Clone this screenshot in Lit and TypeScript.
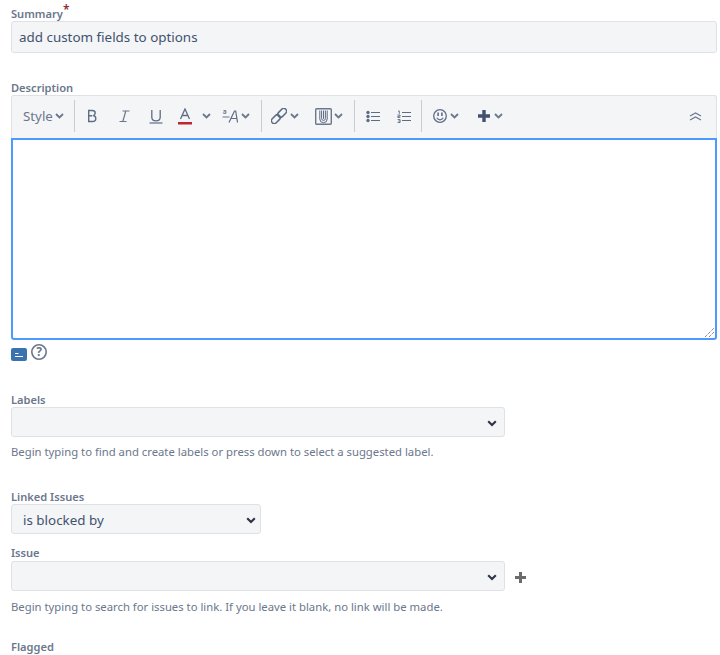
import { LitElement, html, css, svg } from "lit";
import { customElement } from "lit/decorators.js";

const chev = (cls: string) => html`<svg class="chev ${cls}" width="9" height="6" viewBox="0 0 9 6"><path d="M1 1l3.500 3.500L8 1" fill="none" stroke="currentColor" stroke-width="1.800"/></svg>`;

const icon = (cls: string, w: number, h: number, body: unknown) =>
  html`<svg class=${cls} width=${w} height=${h} viewBox="0 0 ${w} ${h}">${body}</svg>`;

const arrow = (cls: string) => html`<svg class="arrow ${cls}" width="10" height="7" viewBox="0 0 10 7"><path d="M1.200 1.200L5 5l3.800-3.800" fill="none" stroke="#2d3446" stroke-width="2.100"/></svg>`;

@customElement("app-root")
export class AppRoot extends LitElement {
  static styles = css`
    :host {
      display: block;
      box-sizing: border-box;
      width: 720px;
      height: 655px;
      overflow: hidden;
      padding: 6px 3px 0 11px;
      background: #fff;
      font-family: "Noto Sans", "Open Sans", sans-serif;
      color: #42526e;
    }
    label, .label {
      display: block;
      font-size: 11.1px;
      line-height: 15px;
      font-weight: 600;
      color: #6b778c;
    }
    .req { color: #8b2e3a; font-size: 12px; position: relative; top: -4px; line-height: 0; }
    .input {
      box-sizing: border-box;
      width: 100%;
      height: 32px;
      margin: 0;
      padding: 0 7px;
      background: #f4f5f7;
      border: 1px solid #dfe1e6;
      border-radius: 3px;
      font: 13.4px/30px "Noto Sans", sans-serif;
      color: #42526e;
      display: block;
    }
    .desc { margin-top: 27px; }
    .toolbar {
      box-sizing: border-box;
      height: 43px;
      display: flex;
      align-items: center;
      background: #f4f5f7;
      border: 1px solid #dfe1e6;
      border-bottom: none;
      border-radius: 3px 3px 0 0;
      padding: 0 0 2px 0;
      color: #5e6c84;
    }
    .toolbar svg { flex: none; display: block; }
    .style { font-size: 13.3px; color: #6b778c; margin-left: 11px; width: 31px; flex: none; }
    .chev { color: #6b778c; }
    .sep { width: 1px; height: 32px; background: #c9ccd1; flex: none; }
    .sep1 { margin-left: 10px; }
    .sep2 { margin-left: 11px; }
    .sep3 { margin-left: 11px; }
    .sep4 { margin-left: 10px; }
    .b { margin-left: 11px; }
    .i { margin-left: 20px; }
    .u { margin-left: 19px; }
    .a { margin-left: 15px; }
    .ac { margin-left: 10px; }
    .aa { margin-left: 11px; }
    .ml1 { margin-left: 1px; }
    .ml2 { margin-left: 2px; }
    .ml3 { margin-left: 3px; }
    .ml4 { margin-left: 4px; }
    .link { margin-left: 9px; }
    .clip { margin-left: 16px; }
    .ul { margin-left: 11px; }
    .ol { margin-left: 17px; }
    .smile { margin-left: 11px; }
    .plus { margin-left: 19px; }
    .spacer { flex: 1; }
    .collapse { margin-right: 14px; }
    .editor {
      box-sizing: border-box;
      height: 202px;
      border: 2px solid #4c9aff;
      border-radius: 0 0 3px 3px;
      background: #fff;
      position: relative;
    }
    .grip { position: absolute; right: 0; bottom: 0; }
    .under { display: flex; align-items: flex-start; height: 18px; margin-top: 4px; gap: 4px; }
    .folder { margin-top: 4px; }
    .labels { margin-top: 30px; }
    .sel { position: relative; width: 494px; flex: none; }
    .sel.short { width: 250px; }
    select.input { height: 30px; padding: 0 24px 0 11px; appearance: none; }
    .arrow { position: absolute; top: 13px; right: 8px; pointer-events: none; }
    .arrow.near { right: 5px; }
    .hint { font-size: 11.3px; line-height: 16px; color: #6b778c; margin: 0; }
    .labels .hint { margin-top: 7px; }
    .linked { margin-top: 29px; }
    .issue { margin-top: 11px; }
    .issue label { margin-bottom: 1px; }
    .row { display: flex; align-items: center; gap: 10px; }
    .plusbtn { margin-top: 3px; }
    .issue .hint { margin-top: 8px; }
    .flagged { margin-top: 24px; }
  `;

  render() {
    const ink = "#42526e";
    const tool = "#5e6c84";
    return html`
      <label for="s">Summary<span class="req">*</span></label>
      <input id="s" class="input" .value=${"add custom fields to options"} />

      <div class="desc">
        <span class="label">Description</span>
        <div class="toolbar">
          <span class="style">Style</span>${chev("ml1")}
          <div class="sep sep1"></div>
          ${icon("b", 12, 14, svg`<path d="M2.700 1.500h3.500c1.800 0 3 .9 3 2.600 0 1.300-.8 2.200-2 2.500 1.600.2 2.600 1.200 2.600 2.800 0 1.900-1.400 3.100-3.400 3.100H2.700zM2.700 6.800h3.600" fill="none" stroke="${tool}" stroke-width="1.400"/>`)}
          ${icon("i", 12, 14, svg`<path d="M4.500 2h7M1.500 12.500h7M7.800 2L4.800 12.500" fill="none" stroke="#6b778c" stroke-width="1.200"/>`)}
          ${icon("u", 14, 15, svg`<path d="M2.800 1v7.200c0 2.400 1.500 3.600 4.200 3.600s4.200-1.200 4.200-3.600V1" fill="none" stroke="${tool}" stroke-width="1.300"/><path d="M0.500 14h13" stroke="${tool}" stroke-width="1.200"/>`)}
          ${icon("a", 14, 17, svg`<path d="M2.500 11L7 1l4.500 10M4 7.500h6" fill="none" stroke="${tool}" stroke-width="1.300"/><rect y="14" width="14" height="2.500" fill="#c0262d"/>`)}
          ${chev("ac")}
          ${icon("aa", 18, 15, svg`
            <path d="M1.500 1.500h2.400v2.700M1.200 3.500c0-.6.800-.9 2.700-.7M1.300 4.400h2.800" fill="none" stroke="#6b778c" stroke-width=".9"/>
            <path d="M7 13.500L12.500 2h1.200l1.800 11.500M9 9.500h6" fill="none" stroke="${tool}" stroke-width="1.200"/>
            <path d="M0.500 8h7" stroke="#6b778c" stroke-width="1"/>`)}
          ${chev("ml1")}
          <div class="sep sep2"></div>
          ${icon("link", 16, 16, svg`
            <g fill="none" stroke="${tool}" stroke-width="1.500" transform="rotate(-45 8 8)">
              <rect x="-1.500" y="5.200" width="10" height="5.600" rx="2.800"/>
              <rect x="7.500" y="5.200" width="10" height="5.600" rx="2.800"/>
            </g>`)}
          ${chev("ml3")}
          ${icon("clip", 17, 17, svg`
            <rect x="0.700" y="0.700" width="15.600" height="15.600" rx="1" fill="none" stroke="#6b778c" stroke-width="1.400"/>
            <path d="M4.800 2.500v8.500a3.700 3.700 0 0 0 7.400 0V2.500M8.500 2.500v8.500M6.600 2.500v8a1.900 1.900 0 0 0 3.800 0v-8" fill="none" stroke="${tool}" stroke-width="1"/>`)}
          ${chev("ml2")}
          <div class="sep sep3"></div>
          ${icon("ul", 14, 13, svg`
            <g fill="${tool}"><circle cx="2" cy="2.500" r="1.700"/><circle cx="2" cy="6.500" r="1.700"/><circle cx="2" cy="10.500" r="1.700"/>
            <rect x="5" y="2" width="9" height="1"/><rect x="5" y="6" width="9" height="1"/><rect x="5" y="10" width="9" height="1"/></g>`)}
          ${icon("ol", 14, 13, svg`
            <g fill="none" stroke="${tool}" stroke-width=".9"><path d="M1 1h1.300v2.800M.6 5h2.500v1.200H.8v1.300h2.500M.6 9.500h2.500v3H.6M1.300 11h1.800"/></g>
            <g fill="${tool}"><rect x="5" y="2" width="9" height="1"/><rect x="5" y="6" width="9" height="1"/><rect x="5" y="10" width="9" height="1"/></g>`)}
          <div class="sep sep4"></div>
          ${icon("smile", 14, 14, svg`
            <circle cx="7" cy="7" r="6.300" fill="none" stroke="${tool}" stroke-width="1.300"/>
            <rect x="4.300" y="3.500" width="1.600" height="3.500" fill="${tool}"/><rect x="8.100" y="3.500" width="1.600" height="3.500" fill="${tool}"/>
            <path d="M3.800 8.800c.8 1.300 1.900 2 3.200 2s2.400-.7 3.200-2" fill="none" stroke="${tool}" stroke-width="1.200"/>`)}
          ${chev("ml3")}
          ${icon("plus", 12, 12, svg`<path d="M4.300 0h3.400v4.300H12v3.400H7.700V12H4.300V7.700H0V4.300h4.300z" fill="${ink}"/>`)}
          ${chev("ml4")}
          <div class="spacer"></div>
          ${icon("collapse", 13, 9, svg`<path d="M1 4l5.500-3L12 4M1 8l5.500-3L12 8" fill="none" stroke="#6b778c" stroke-width="1.200"/>`)}
        </div>
        <div class="editor">
          <svg class="grip" width="11" height="11" viewBox="0 0 11 11"><path d="M1 10L10 1M5 10l5-5" stroke="#555" stroke-width="1" stroke-dasharray="1 1" fill="none"/></svg>
        </div>
        <div class="under">
          <svg class="folder" width="16" height="13" viewBox="0 0 16 13"><rect width="16" height="13" rx="2" fill="#3b73af"/><path d="M4 5.500h3.500M4 8.500h8" stroke="#fff" stroke-width="1.100" fill="none"/></svg>
          <svg width="16" height="16" viewBox="0 0 16 16"><circle cx="8" cy="8" r="7.200" fill="none" stroke="#6b778c" stroke-width="1.600"/><text x="8" y="12.300" text-anchor="middle" font-size="12" font-weight="700" fill="#6b778c" font-family="Noto Sans">?</text></svg>
        </div>
      </div>

      <div class="labels">
        <label for="l">Labels</label>
        <div class="sel"><select id="l" class="input"><option></option></select>${arrow("")}</div>
        <p class="hint">Begin typing to find and create labels or press down to select a suggested label.</p>
      </div>

      <div class="linked">
        <label for="k">Linked Issues</label>
        <div class="sel short"><select id="k" class="input"><option>is blocked by</option></select>${arrow("near")}</div>
      </div>

      <div class="issue">
        <label for="i">Issue</label>
        <div class="row">
          <div class="sel"><select id="i" class="input"><option></option></select>${arrow("")}</div>
          <svg class="plusbtn" width="11" height="11" viewBox="0 0 11 11"><path d="M4 0h3v4h4v3H7v4H4V7H0V4h4z" fill="#6b6b6b"/></svg>
        </div>
        <p class="hint">Begin typing to search for issues to link. If you leave it blank, no link will be made.</p>
      </div>

      <div class="flagged"><span class="label">Flagged</span></div>
    `;
  }
}
